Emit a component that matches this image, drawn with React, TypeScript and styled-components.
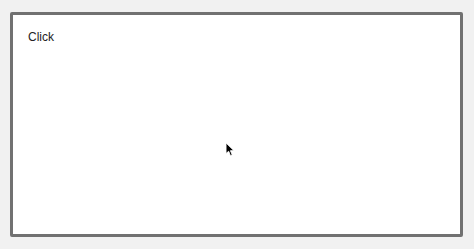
import styled, { createGlobalStyle } from "styled-components";

const Global = createGlobalStyle`
  html, body {
    margin: 0;
    padding: 0;
    background: #f1f1f1;
    font-family: "Liberation Sans", Arial, sans-serif;
  }
`;

const Page = styled.div`
  width: 474px;
  height: 249px;
  box-sizing: border-box;
  padding: 12px 11px 12px 10px;
  display: flex;
`;

const Frame = styled.div`
  position: relative;
  flex: 1;
  box-sizing: border-box;
  background: #ffffff;
  border: 3px solid #717171;
  border-radius: 2px;
  padding: 15px 15px;
`;

const Label = styled.div`
  font-size: 12px;
  color: #222;
  line-height: 14px;
`;

const Cursor = styled.svg`
  position: absolute;
  left: 212px;
  top: 127px;
`;

export default function App() {
  return (
    <>
      <Global />
      <Page>
        <Frame>
          <Label>Click</Label>
          <Cursor width="10" height="15" viewBox="0 0 11 17">
            <path
              d="M1 1 L1 13 L4 10.5 L6 15.5 L8 14.5 L6 9.8 L10 9.8 Z"
              fill="#000"
              stroke="#fff"
              strokeWidth="1"
              strokeLinejoin="round"
            />
          </Cursor>
        </Frame>
      </Page>
    </>
  );
}
